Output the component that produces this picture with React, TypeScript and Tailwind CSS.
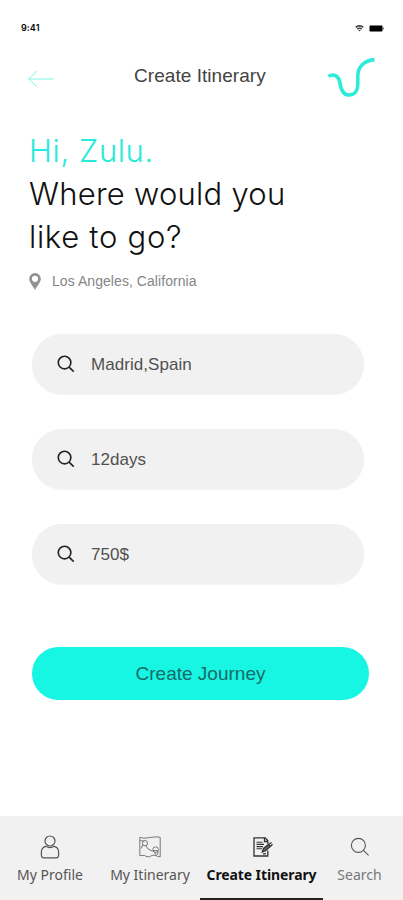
import type { ReactNode } from "react";

const SearchIcon = ({ className }: { className: string }) => (
  <svg viewBox="0 0 20 20" fill="none" stroke="currentColor" className={className}>
    <circle cx="8.4" cy="8.4" r="7" />
    <path d="M13.4 13.4 18.6 18.4" />
  </svg>
);

const StatusBar = () => (
  <div className="flex h-[55px] items-center justify-between pt-px pr-[18px] pl-[21px]">
    <span className="text-[9px] font-semibold tracking-[0.1px] text-black">9:41</span>
    <div className="flex items-center gap-[5px]">
      <svg viewBox="0 0 9 7" className="h-[7px] w-[9px]" fill="none" stroke="#444">
        <path d="M.7 2.4Q4.5-.7 8.3 2.4" strokeWidth="1.7" />
        <path d="M2.3 4Q4.5 2.4 6.7 4" strokeWidth="1.6" />
        <path d="M3.2 5 4.5 6.6 5.8 5Z" fill="#444" stroke="none" />
      </svg>
      <svg viewBox="0 0 16 7" className="h-[7px] w-4">
        <rect x=".5" y=".5" width="13" height="6" rx="1.2" fill="#000" stroke="#777" strokeWidth=".5" />
        <path d="M14.5 2.5v2" stroke="#777" />
      </svg>
    </div>
  </div>
);

const Header = () => (
  <header className="flex h-11 items-center pr-[27px] pl-7">
    <button aria-label="Back" className="mt-[3px] w-[54px]">
      <svg viewBox="0 0 26 18" className="h-[18px] w-[26px]" fill="none" stroke="#6ff3e6" strokeWidth=".9">
        <path d="M9 1 .8 9 9 17M.8 9H25.5" />
      </svg>
    </button>
    <h1 className="ml-[52px] pb-px font-['Liberation_Sans',sans-serif] text-[19px] tracking-[0.05px] text-[#444]">Create Itinerary</h1>
    <svg viewBox="0 0 50 42" className="mt-px ml-auto h-[42px] w-[50px]" fill="none" stroke="#2eead9" strokeWidth="3.6">
      <path d="M2.5 19.5C7.5 16 12.5 19 13.8 25C14.8 32 16.5 38 22.5 38C29.5 38 31.8 34 31.8 26V19C31.8 10 38 3.4 48.5 2.6" />
    </svg>
  </header>
);

const Field = ({ value }: { value: string }) => (
  <div className="flex h-[60px] items-center gap-4 rounded-full bg-[#f1f1f1] pl-[25px] shadow-[0_1px_1px_#f4f4f4]">
    <SearchIcon className="h-[18px] w-[18px] stroke-[1.8] text-[#222]" />
    <span className="pt-0.5 font-['Liberation_Sans',sans-serif] text-[17px] tracking-[0.05px] text-[#505050]">{value}</span>
  </div>
);

const ProfileIcon = () => (
  <svg viewBox="0 0 20 24" className="h-6 w-5" fill="none" stroke="#555" strokeWidth="1.2">
    <circle cx="10" cy="6" r="5" />
    <path d="M5.8 11.3C2.8 12 1.4 14 1.4 17V20.3Q1.4 22.8 3.8 22.8H16.2Q18.6 22.8 18.6 20.3V17C18.6 14 17.2 12 14.2 11.3Q10 14 5.8 11.3Z" />
  </svg>
);

const MapIcon = () => (
  <svg viewBox="0 0 22 22" className="h-[22px] w-[22px]" fill="none" stroke="#777">
    <path d="M.8 1.3Q4 3 10.5 1.6T21.2 1.3V20.8Q18.5 20.8 16 19.2Q13 18.8 10.5 20.8Q8 21.2 5.5 19.5L.8 19.6Z" />
    <circle cx="6" cy="7.2" r="2.6" />
    <path d="M3.8 8.8 2.2 12.5M6.8 9.8Q8.2 13.5 13.6 15.3M1 4.2Q3 5.8 5.5 4.6" />
    <circle cx="16.6" cy="13.6" r="2.8" />
    <path d="M14.2 15.2Q16 16.5 17.5 19.5M19 15.2 18.6 18.8M14 14.5 19 14.8" />
  </svg>
);

const NoteIcon = () => (
  <svg viewBox="0 0 20 20" className="ml-0.5 h-5 w-5" fill="none" stroke="#333" strokeWidth="1.3">
    <path d="M14.8 6.8V3.8L12.3.9H1V19H14.8V13.5M11.5 1V4.5H15" />
    <path d="M3.5 5.2H9.5M3.5 7.4H11M3.5 9.6H10M3.5 11.8H9" strokeWidth="1.1" />
    <path d="M9.3 14.8 10.5 11.5 15.5 7.5 17.3 9.5 12.5 13.6ZM15.5 7.5 18.5 5.5M17.3 9.5 19.5 7.2" fill="#666" />
    <path d="M10 16.8H13" />
  </svg>
);

type TabProps = { label: string; icon: ReactNode; className: string };

const Tab = ({ label, icon, className }: TabProps) => (
  <button className={`flex h-[84px] shrink-0 flex-col items-center pt-[18px] text-[14px] whitespace-nowrap ${className}`}>
    <span className="flex h-[26px] items-center">{icon}</span>
    <span className="mt-[5px] leading-5">{label}</span>
  </button>
);

export default function App() {
  return (
    <div className="flex h-[900px] w-[403px] flex-col overflow-hidden bg-white font-[Inter,'Liberation_Sans',sans-serif]">
      <StatusBar />
      <Header />

      <main className="flex flex-1 flex-col pt-[30px]">
        <div className="pl-[29px]">
          <h2 className="text-[31px] leading-[43px] font-light text-[#111]">
            <span className="block tracking-[0.6px] text-[#28ead9]">Hi, Zulu.</span>
            <span className="block tracking-[0.25px]">Where would you</span>
            <span className="block tracking-[0.7px]">like to go?</span>
          </h2>
          <div className="mt-[13px] flex h-5 items-center gap-[11px]">
            <svg viewBox="0 0 12 17" className="h-[17px] w-3" fill="#929292" fillRule="evenodd">
              <path d="M6 0A5.8 5.8 0 0 1 11.8 5.8C11.8 9.5 8 13 6 17C4 13 .2 9.5 .2 5.8A5.8 5.8 0 0 1 6 0ZM6 2.7A3.1 3.1 0 1 0 6 8.9A3.1 3.1 0 1 0 6 2.7Z" />
            </svg>
            <span className="font-['Liberation_Sans',sans-serif] text-[14px] tracking-[0.06px] text-[#858585]">Los Angeles, California</span>
          </div>
        </div>

        <div className="mt-[43px] flex flex-col gap-[35px] pr-[39px] pl-8">
          <Field value="Madrid,Spain" />
          <Field value="12days" />
          <Field value="750$" />
        </div>

        <button className="mt-[63px] mr-[34px] ml-8 h-[53px] rounded-full bg-[#17f5e3] pt-0.5 font-['Liberation_Sans',sans-serif] text-[19px] text-[#166b68]">
          Create Journey
        </button>
      </main>

      <nav className="flex h-[84px] bg-[#f1f1f1] font-['Noto_Sans',sans-serif]">
        <Tab label="My Profile" icon={<ProfileIcon />} className="w-[100px] text-[#555]" />
        <Tab label="My Itinerary" icon={<MapIcon />} className="w-[100px] text-[#555]" />
        <Tab label="Create Itinerary" icon={<NoteIcon />} className="w-[123px] border-b-2 border-[#222] font-bold tracking-[-0.1px] text-[#111]" />
        <Tab label="Search" icon={<SearchIcon className="h-5 w-5 stroke-[1.1] text-[#555]" />} className="w-[73px] text-[#777]" />
      </nav>
    </div>
  );
}
